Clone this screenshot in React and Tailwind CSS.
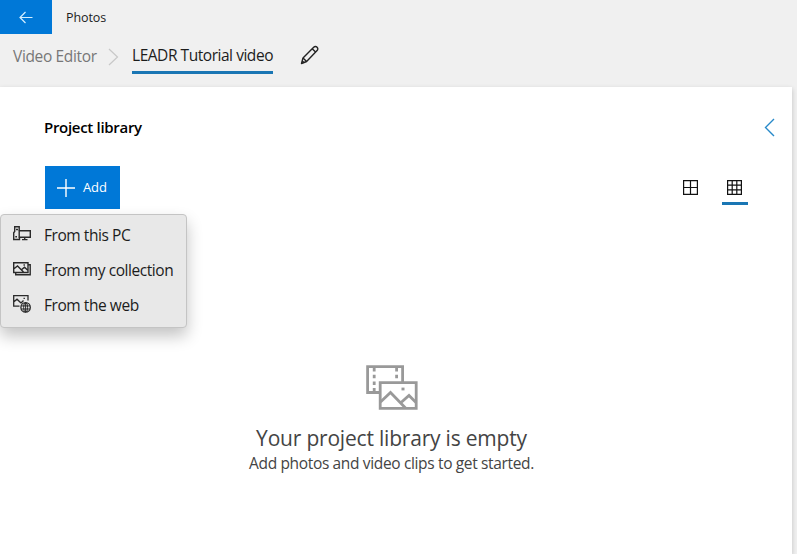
function BackIcon() {
  return (
    <svg width="14" height="13" viewBox="0 0 14 13" fill="none" stroke="#d3efff" strokeWidth="1.2">
      <path d="M13.500 6.500H1M6.500 1 1 6.500 6.500 12" />
    </svg>
  );
}

function PencilIcon() {
  return (
    <svg width="20" height="20" viewBox="0 0 20 20" fill="none" stroke="#222" strokeWidth="1.4" strokeLinejoin="round">
      <path d="M1.500 18.500 3 12.900 13.700 2.200c1-1 2.500-.9 3.400 0s1 2.400 0 3.400L6.600 16.500Z" />
      <path d="M12.200 3.700 15.600 7.100M3 12.900 6.600 16.500M2.300 15.900 4.100 17.700" />
    </svg>
  );
}

function ComputerIcon() {
  return (
    <svg width="20" height="18" viewBox="0 0 20 18" fill="none" stroke="#2a2a2a" strokeWidth="1.4">
      <path d="M7.200 5.500V1.700H2.700V6.500L1.700 7.800V14.500H7.500V12.500M4 4.500H6M3.300 11.800H5" />
      <path d="M7.200 5.700H18.300V12.200H7.200ZM12.700 12.200V14.500M10 14.600H15.500" />
    </svg>
  );
}

function CollectionIcon() {
  return (
    <svg width="20" height="18" viewBox="0 0 20 18" fill="none" stroke="#2a2a2a" strokeWidth="1.4">
      <path d="M1.700 2.700H16V12.500H1.700ZM1.700 9 5.500 6 11.500 12M9.500 9.800 12.500 7.200 16 10.500" />
      <path d="M16 4.700H18.200V14.800H3.700V12.500" />
      <path d="M11.500 5h1.400" />
    </svg>
  );
}

function WebIcon() {
  return (
    <svg width="20" height="20" viewBox="0 0 20 20" fill="none" stroke="#2a2a2a" strokeWidth="1.3">
      <path d="M7.500 12.200H1.700V1.700H16V6.500M1.700 8 5 5.200 9 9M9 9 11.500 6.500M11.500 4.300h1.400" />
      <circle cx="13.600" cy="13.400" r="4.700" />
      <ellipse cx="13.600" cy="13.400" rx="2" ry="4.700" strokeWidth="1" />
      <path d="M9.200 11.900H18M9.200 15H18M13.600 8.700V18" strokeWidth="1" />
    </svg>
  );
}

function MediaIcon() {
  return (
    <svg width="52" height="46" viewBox="0 0 52 46" fill="none" stroke="#999" strokeWidth="2.800">
      <path d="M13 27.500H1.600V1.600H36.600V17" />
      <path d="M8.200 3v25M30.600 3v13" strokeDasharray="3.500 3.200" />
      <path d="M14.200 17.600H50.200V43.400H14.200Z" />
      <path d="M14.500 37 24.500 27.500 39.500 43M34.500 38 43 30.500 50 37.500" />
      <path d="M35.500 24h3" />
    </svg>
  );
}

const menuItems = [
  { label: "From this PC", Icon: ComputerIcon },
  { label: "From my collection", Icon: CollectionIcon },
  { label: "From the web", Icon: WebIcon },
];

export default function App() {
  return (
    <div className="flex h-[554px] w-[797px] flex-col overflow-hidden bg-[#f0f0f0] font-['Open_Sans',sans-serif] whitespace-nowrap text-[#1c1c1c]">
      <header className="h-[87px] shrink-0">
        <div className="flex h-[34px] items-center">
          <button className="flex h-[34px] w-[52px] items-center justify-center bg-[#0078d7]">
            <BackIcon />
          </button>
          <span className="ml-[14px] pt-[2px] text-[12.5px] tracking-[-0.1px]">Photos</span>
        </div>
        <nav className="flex h-[40px] items-start pl-[13px]">
          <span className="w-[95px] pt-[10px] text-[15.5px] leading-6 tracking-[-0.35px] text-[#777]">Video Editor</span>
          <svg className="mt-[14px] w-[11px]" height="18" viewBox="0 0 11 18" fill="none" stroke="#c8c8c8" strokeWidth="1.200">
            <path d="m1 1 8.500 8L1 17" />
          </svg>
          <span className="ml-[13px] h-[40px] w-[141px] border-b-[3px] border-[#1a76b4] pt-[9px] text-[15.5px] leading-6 tracking-[-0.46px]">
            LEADR Tutorial video
          </span>
          <button className="mt-[11px] ml-[27px]"><PencilIcon /></button>
        </nav>
      </header>

      <main className="relative w-[792px] flex-1 bg-white shadow-[0_2px_5px_rgba(0,0,0,0.2)]">
        <div className="flex h-[79px] items-start justify-between pr-[17px] pl-[44px]">
          <h1 className="pt-[28px] text-[15px] leading-6 font-semibold tracking-[-0.3px] text-black">Project library</h1>
          <button className="mt-[31px]">
            <svg width="11" height="19" viewBox="0 0 11 19" fill="none" stroke="#2789c9" strokeWidth="1.400">
              <path d="M10 1 1.500 9.500 10 18" />
            </svg>
          </button>
        </div>
        <div className="flex h-[44px] items-start pl-[45px]">
          <button className="flex h-[43px] w-[75px] items-center bg-[#0078d7] pl-[12px] text-white">
            <svg width="18" height="18" viewBox="0 0 18 18" fill="none" stroke="currentColor" strokeWidth="1.400">
              <path d="M9 0v18M0 9h18" />
            </svg>
            <span className="ml-[8px] text-[13px] tracking-[-0.1px]">Add</span>
          </button>
          <div className="ml-auto flex pr-[44px]">
            <button className="mt-[14px] h-[15px] w-[15px]">
              <svg width="15" height="15" viewBox="0 0 15 15" fill="none" stroke="#111" strokeWidth="1.200">
                <path d="M.6.6H14.400V14.400H.6ZM7.500.6V14.400M.6 7.500H14.400" />
              </svg>
            </button>
            <button className="ml-[24px] flex h-[39px] w-[26px] justify-start border-b-[3px] border-[#1a76b4] pt-[14px] pl-[5px]">
              <svg width="15" height="15" viewBox="0 0 15 15" fill="none" stroke="#111" strokeWidth="1.200">
                <path d="M.6.6H14.400V14.400H.6ZM5.200.6V14.400M9.800.6V14.400M.6 5.200H14.400M.6 9.800H14.400" />
              </svg>
            </button>
          </div>
        </div>
        <section className="flex flex-col items-center pt-[155px] pr-[9px] text-[#444]">
          <MediaIcon />
          <h2 className="mt-[11px] text-[21px] leading-8 tracking-[-0.2px]">Your project library is empty</h2>
          <p className="-mt-[3px] text-[15.5px] leading-6 tracking-[-0.35px]">Add photos and video clips to get started.</p>
        </section>

        <ul className="absolute top-[127px] left-0 h-[114px] w-[187px] rounded-[4px] border border-[#c4c4c4] bg-[#e8e8e8] pt-[3px] shadow-[0_8px_16px_rgba(0,0,0,0.24)]">
          {menuItems.map(({ label, Icon }) => (
            <li key={label} className="flex h-[35px] items-center pl-[11px]">
              <span className="w-[32px] pb-[3px]"><Icon /></span>
              <span className="text-[15.5px] tracking-[-0.44px]">{label}</span>
            </li>
          ))}
        </ul>
      </main>
    </div>
  );
}
